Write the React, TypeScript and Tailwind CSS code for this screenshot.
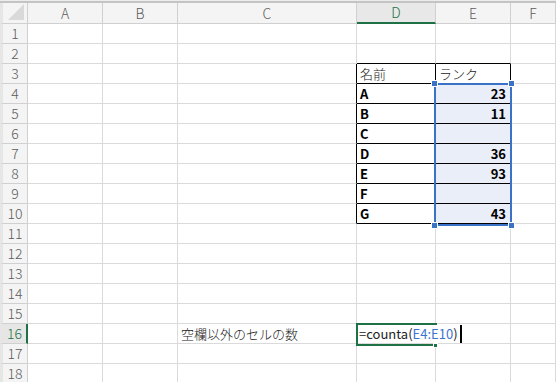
const COLS = ["A", "B", "C", "D", "E", "F"];

const tableRows: Record<number, [string, string]> = {
  3: ["名前", "ランク"],
  4: ["A", "23"],
  5: ["B", "11"],
  6: ["C", ""],
  7: ["D", "36"],
  8: ["E", "93"],
  9: ["F", ""],
  10: ["G", "43"],
};

const inTable = (r: number) => r >= 3 && r <= 10;

const Cell = ({ row, col }: { row: number; col: number }) => {
  // col: 0=A ... 5=F
  let cls = "h-[20px] border-r border-b border-[#dadada] flex items-center overflow-visible whitespace-nowrap text-[13px] leading-none";
  let content: React.ReactNode = null;

  if (inTable(row) && (col === 3 || col === 4)) {
    cls = "h-[20px] border-r border-b border-black flex items-center whitespace-nowrap text-[13px] leading-none";
    const [name, rank] = tableRows[row];
    if (row === 3) {
      content = <span className="pl-[3px] text-[#222] font-light">{col === 3 ? name : rank}</span>;
    } else if (col === 3) {
      content = <span className="pl-[3px] font-bold text-black">{name}</span>;
    } else {
      cls += " bg-[#e9eef8] justify-end";
      content = <span className="pr-[4px] font-bold text-black">{rank}</span>;
    }
  } else if (row === 2 && (col === 3 || col === 4)) {
    cls = "h-[20px] border-r border-b border-r-[#dadada] border-b-black";
  } else if (inTable(row) && col === 2) {
    cls = "h-[20px] border-r border-b border-r-black border-b-[#dadada]";
  }

  if (row === 16 && col === 2) {
    content = <span className="pl-[3px] text-[#222] font-light">空欄以外のセルの数</span>;
  }
  if (row === 16 && col === 3) {
    // formula being typed, spills over into E16
    content = (
      <span className="relative z-10 pl-[2px] flex items-center">
        <span className="bg-white text-[#222] h-[18px] flex items-center">
          =counta(<span className="text-[#3c74cf]">E4:E10</span>)
        </span>
        <span className="ml-[2px] w-[2px] h-[18px] bg-black" />
      </span>
    );
  }

  return <div className={cls}>{content}</div>;
};

export default function App() {
  const rows = Array.from({ length: 18 }, (_, i) => i + 1);
  return (
    <div
      className="relative w-[556px] h-[382px] overflow-hidden bg-white"
      style={{ fontFamily: '"Noto Sans CJK JP", "Noto Sans", sans-serif' }}
    >
      <div className="h-[1px] bg-[#ececec]" />
      <div className="h-[2px] bg-[#c4c4c4]" />

      <div className="grid grid-cols-[28px_75px_75px_179px_79px_75px_1fr]">
        {/* column header */}
        <div className="relative h-[21px] bg-[#f4f4f4] border-r border-b border-[#d0d0d0] border-l-[3px] border-l-[#e6e6e6]">
          <div className="absolute right-[3px] bottom-[3px] w-0 h-0 border-l-[16px] border-l-transparent border-b-[16px] border-b-[#d9d9d9]" />
        </div>
        {COLS.map((c) =>
          c === "D" ? (
            <div
              key={c}
              className="h-[21px] bg-[#e8e8e8] border-r border-[#d0d0d0] border-b-2 border-b-[#1e7145] flex items-center justify-center text-[14px] text-[#1e7145] font-light"
            >
              {c}
            </div>
          ) : (
            <div
              key={c}
              className="h-[21px] bg-[#f4f4f4] border-r border-b border-[#d0d0d0] flex items-center justify-center text-[14px] text-[#5c5c5c] font-light"
            >
              {c}
            </div>
          )
        )}

        {rows.map((r) => (
          <div key={r} className="contents">
            {r === 16 ? (
              <div className="h-[20px] bg-[#e6e6e6] border-b border-[#d0d0d0] border-r-2 border-r-[#1e7145] border-l-[3px] border-l-[#e6e6e6] flex items-center justify-center text-[14px] text-[#1e7145] font-light">
                {r}
              </div>
            ) : (
              <div className="h-[20px] bg-[#f4f4f4] border-r border-b border-[#d0d0d0] border-l-[3px] border-l-[#e6e6e6] flex items-center justify-center text-[14px] text-[#5c5c5c] font-light">
                {r}
              </div>
            )}
            {COLS.map((_, ci) => (
              <Cell key={ci} row={r} col={ci} />
            ))}
          </div>
        ))}
      </div>

      {/* selection E4:E10 */}
      <div className="absolute left-[434px] top-[83px] w-[78px] h-[143px] border-2 border-[#3a72c8] pointer-events-none">
        <div className="absolute -left-[5px] -top-[5px] w-[7px] h-[7px] bg-[#3a72c8] border border-white" />
        <div className="absolute -right-[5px] -top-[5px] w-[7px] h-[7px] bg-[#3a72c8] border border-white" />
        <div className="absolute -left-[5px] -bottom-[5px] w-[7px] h-[7px] bg-[#3a72c8] border border-white" />
        <div className="absolute -right-[5px] -bottom-[5px] w-[7px] h-[7px] bg-[#3a72c8] border border-white" />
      </div>

      {/* active cell D16 */}
      <div className="absolute left-[356px] top-[323px] w-[81px] h-[23px] border-2 border-[#1e7145] pointer-events-none">
        <div className="absolute right-[-3px] bottom-[-4px] w-[5px] h-[5px] bg-[#1e7145] border border-white" />
      </div>
    </div>
  );
}
